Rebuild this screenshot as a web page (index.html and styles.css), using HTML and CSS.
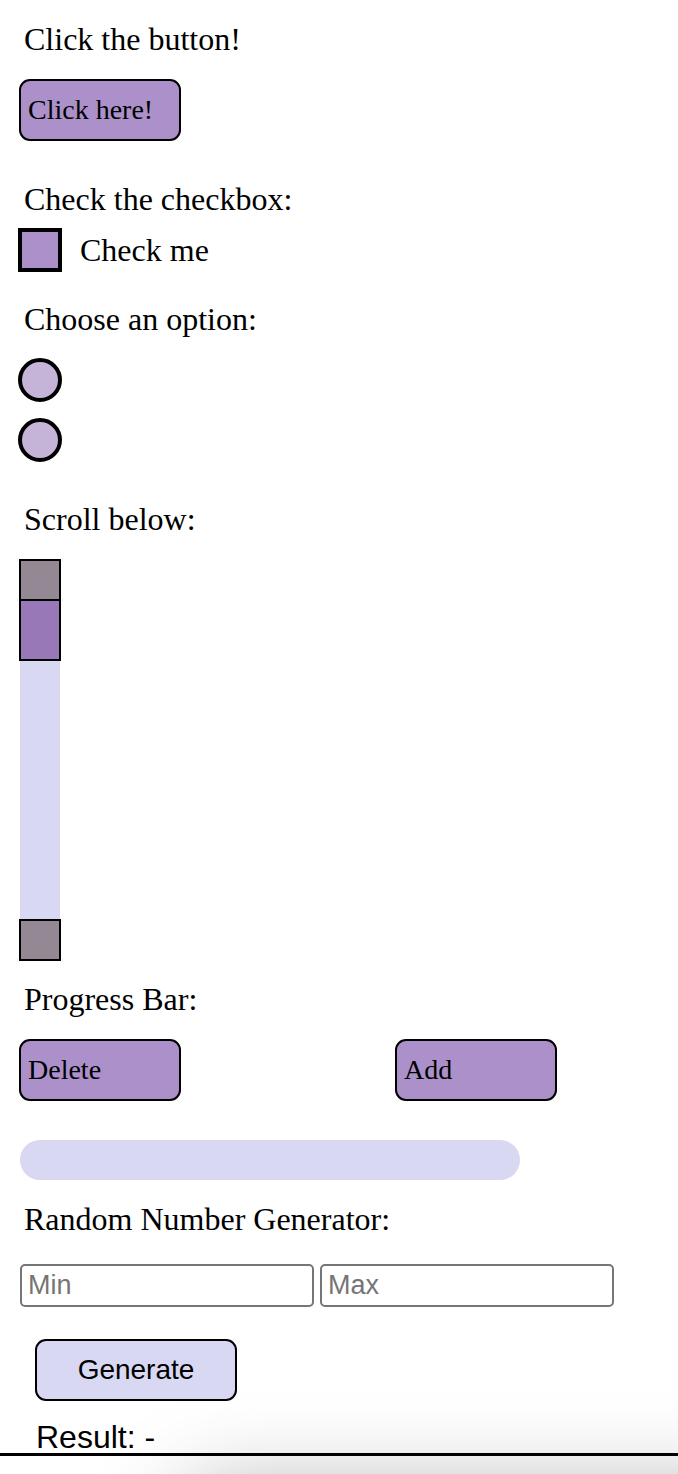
FILE: index.html
```html
<!DOCTYPE html>
<html lang="en">
<head>
<meta charset="utf-8">
<meta name="viewport" content="width=device-width, initial-scale=1">
<title>Widgets</title>
<link rel="stylesheet" href="styles.css">
</head>
<body>
<main class="page">
  <section class="group group-button">
    <h2 class="label">Click the button!</h2>
    <button class="btn" type="button">Click here!</button>
  </section>

  <section class="group group-check">
    <h2 class="label">Check the checkbox:</h2>
    <label class="check-row"><input class="mark" type="checkbox">Check me</label>
  </section>

  <section class="group group-radio">
    <h2 class="label">Choose an option:</h2>
    <div class="radios">
      <input class="mark mark-round" type="radio" name="option" aria-label="Option 1">
      <input class="mark mark-round" type="radio" name="option" aria-label="Option 2">
    </div>
  </section>

  <section class="group group-scroll">
    <h2 class="label">Scroll below:</h2>
    <div class="scroller">
      <button class="scroll-end" type="button" aria-label="Scroll up"></button>
      <div class="track"><button class="thumb" type="button" aria-label="Scroll thumb"></button></div>
      <button class="scroll-end" type="button" aria-label="Scroll down"></button>
    </div>
  </section>

  <section class="group group-progress">
    <h2 class="label" id="progress-label">Progress Bar:</h2>
    <div class="progress-actions">
      <button class="btn" type="button">Delete</button>
      <button class="btn" type="button">Add</button>
    </div>
    <progress class="bar" value="0" max="100" aria-labelledby="progress-label"></progress>
  </section>

  <section class="group group-random">
    <h2 class="label">Random Number Generator:</h2>
    <div class="fields">
      <input class="field" type="text" placeholder="Min" aria-label="Min">
      <input class="field" type="text" placeholder="Max" aria-label="Max">
    </div>
    <button class="btn btn-generate" type="button">Generate</button>
    <output class="result">Result: -</output>
  </section>
  <div class="footer"></div>
  <div class="shade"></div>
</main>
</body>
</html>
```
FILE: styles.css
```css
* { box-sizing: border-box; }

body {
  margin: 0;
  background: #fff;
  color: #000;
  font-family: "Liberation Serif", "Times New Roman", serif;
  font-size: 32px;
  line-height: 38px;
}

.page {
  position: relative;
  z-index: 0;
  min-height: 100vh;
  padding-top: 20px;
  overflow: hidden;
}

.group {
  display: flex;
  flex-direction: column;
  align-items: flex-start;
  padding: 0 19px;
}

.group-button { gap: 21px; padding-bottom: 39px; }
.group-check { gap: 10px; padding: 0 18px 28px; }
.group-radio { gap: 20px; padding: 0 18px 38px; }
.group-scroll { gap: 21px; padding-bottom: 19px; }
.group-progress { padding-bottom: 20px; }
.group-random { padding: 0 20px; }

.label {
  margin: 0 0 0 5px;
  font-size: 32px;
  font-weight: 400;
}

.group-check .label,
.group-radio .label { margin-left: 6px; }
.group-random .label { margin-left: 4px; }

.btn {
  width: 162px;
  height: 62px;
  padding: 0 7px;
  border: 2px solid #000;
  border-radius: 11px;
  background: #ab90ca;
  color: #000;
  font: 28px "Liberation Serif", "Times New Roman", serif;
  text-align: left;
}

.check-row {
  display: flex;
  align-items: center;
  gap: 18px;
}

.mark {
  appearance: none;
  width: 44px;
  height: 44px;
  margin: 0;
  border: 4px solid #000;
  background: #ab90ca;
}

.mark-round {
  border-radius: 50%;
  background: #c5b3d8;
}

.radios {
  display: flex;
  flex-direction: column;
  gap: 16px;
}

.scroller {
  display: flex;
  flex-direction: column;
  width: 42px;
}

.scroll-end,
.thumb {
  display: block;
  width: 42px;
  height: 42px;
  padding: 0;
  border: 2px solid #000;
  border-radius: 0;
  background: #948895;
}

.track {
  display: flex;
  justify-content: center;
  width: 40px;
  height: 320px;
  margin: -2px auto 0;
  background: #d8d8f2;
}

.thumb {
  flex: none;
  height: 62px;
  background: #9878b6;
}

.progress-actions {
  display: flex;
  justify-content: space-between;
  width: 100%;
  max-width: 538px;
  margin-top: 21px;
}

.bar {
  appearance: none;
  width: 100%;
  max-width: 500px;
  height: 40px;
  margin: 39px 0 0 1px;
  border: 0;
  border-radius: 20px;
  background: #d8d8f2;
  overflow: hidden;
}

.bar::-webkit-progress-bar { background: #d8d8f2; }
.bar::-webkit-progress-value { background: #ab90ca; }

.fields {
  display: flex;
  gap: 6px;
  width: 100%;
  max-width: 594px;
  margin-top: 26px;
}

.field {
  flex: 1;
  min-width: 0;
  height: 43px;
  padding: 0 6px;
  border: 2px solid #767676;
  border-radius: 5px;
  background: #fff;
  font: 27px "Liberation Sans", Arial, sans-serif;
}

.field::placeholder { color: #757575; }

.btn-generate {
  width: 202px;
  margin: 32px 0 0 15px;
  background: #d8d8f2;
  font-family: "Liberation Sans", Arial, sans-serif;
  text-align: center;
}

.result {
  margin: 20px 0 0 16px;
  font-family: "Liberation Sans", Arial, sans-serif;
  line-height: 32px;
}

.footer {
  height: 21px;
  border-top: 3px solid #000;
}

/* Soft shadow rising from below the bottom edge */
.shade {
  position: absolute;
  z-index: -1;
  right: -200px;
  bottom: -326px;
  left: 190px;
  height: 300px;
  box-shadow: 0 0 90px rgba(0, 0, 0, 0.4);
}
```
